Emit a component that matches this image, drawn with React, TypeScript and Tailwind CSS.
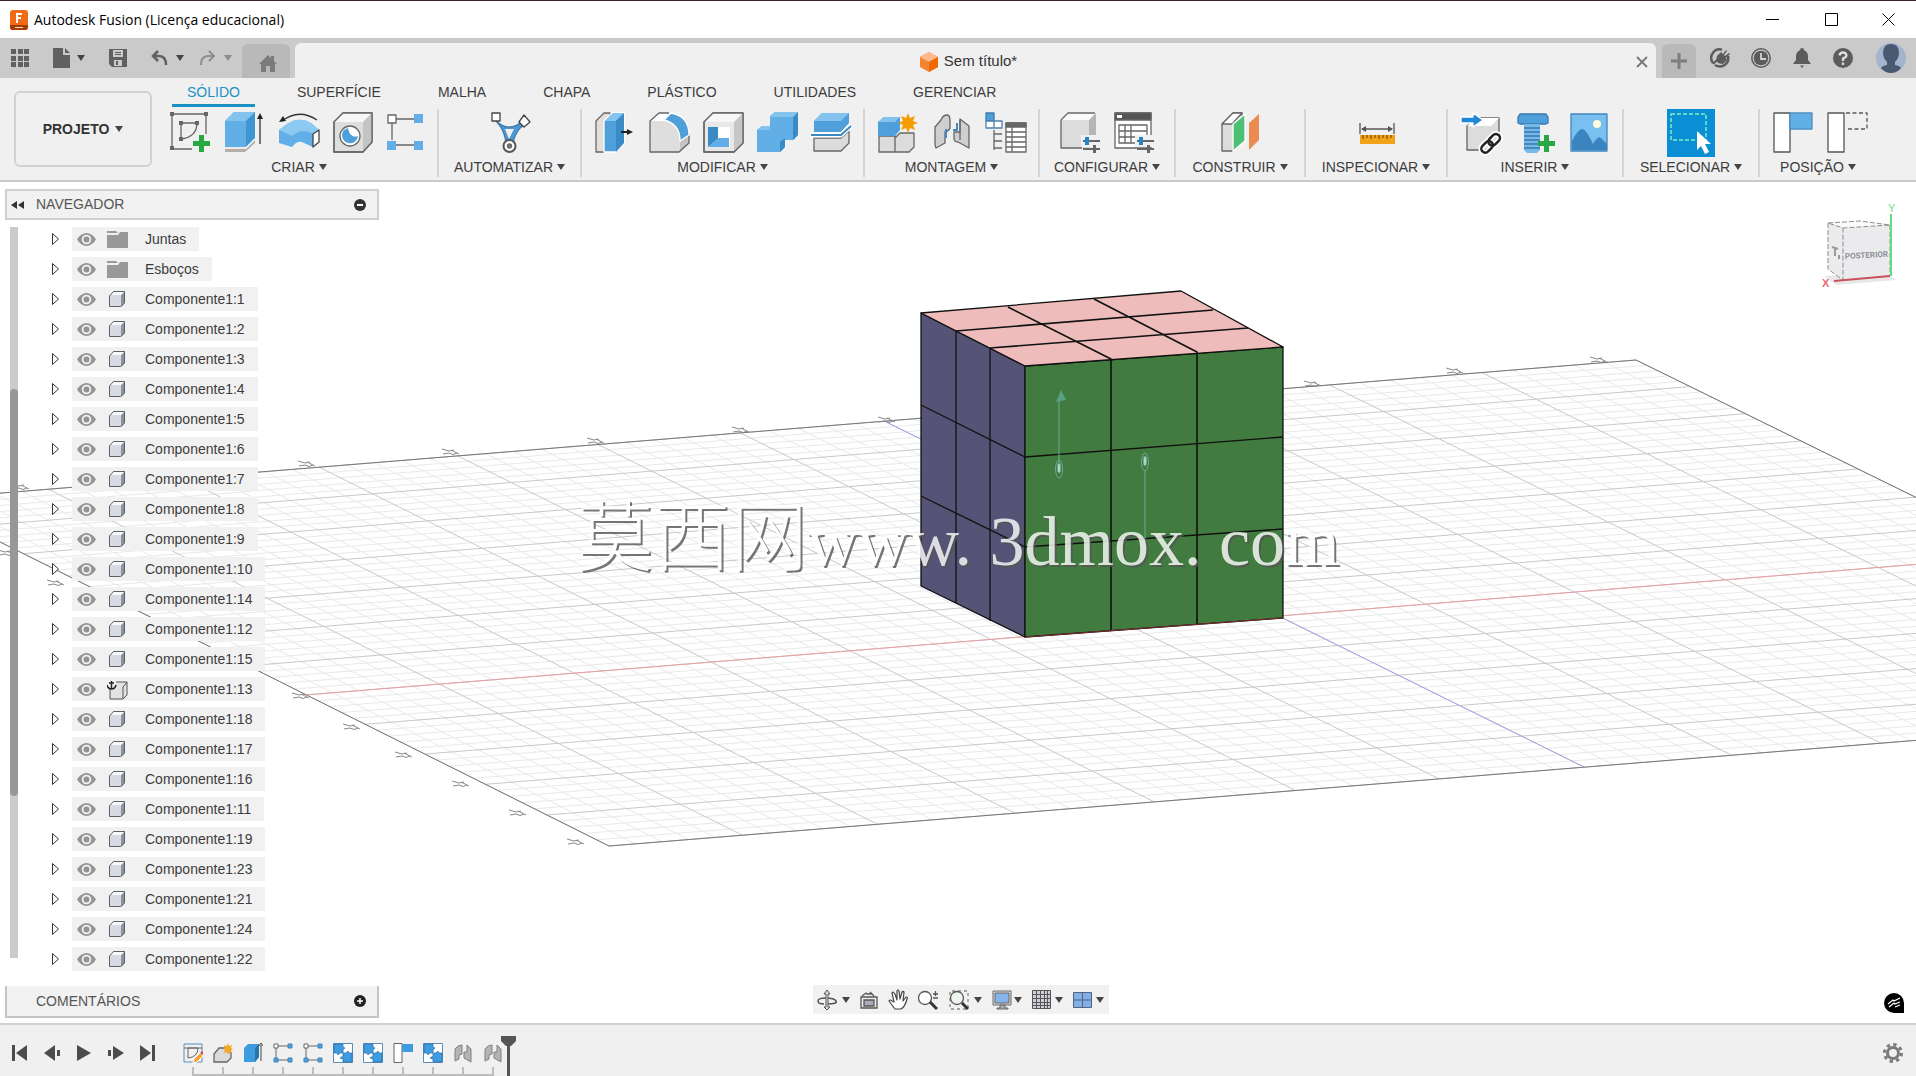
import React from "react";

type Kids = { children: React.ReactNode };

const Ico = ({ children }: Kids) => (
  <svg viewBox="0 0 40 42" className="h-[42px] w-10 flex-none overflow-visible" fill="none" stroke="#666" strokeWidth="1.3" strokeLinejoin="round" aria-hidden="true">
    {children}
  </svg>
);

const Caret = ({ light = false }: { light?: boolean }) => (
  <svg viewBox="0 0 8 6" className={light ? "h-1.5 w-2 flex-none fill-[#8d8d8d]" : "h-1.5 w-2 flex-none fill-[#444]"} aria-hidden="true">
    <path d="M0 0h8L4 6z" />
  </svg>
);

const Plus = ({ x, y }: { x: number; y: number }) => (
  <path transform={`translate(${x} ${y})`} d="M6 0h5v6h6v5h-6v6H6v-6H0V6h6z" fill="#28a745" stroke="none" />
);

/* ---------- ribbon drawings ---------- */

const SketchIcon = () => (
  <Ico>
    <path d="M1 2h34v20M1 2v35h20" />
    <path d="M10 11h16M10 11v16q16-2 16-16" />
    <path d="M-1 0h4v4h-4zM33 0h4v4h-4zM-1 34h4v4h-4zM8 9h4v4H8zM24 9h4v4h-4zM8 25h4v4H8z" fill="#666" stroke="none" />
    <Plus x={22} y={23} />
  </Ico>
);
const ExtrudeIcon = () => (
  <Ico>
    <path d="M0 35v5h20l10-9v-5l-8 9z" fill="#b5aea8" stroke="none" />
    <path d="M0 9 9 0h21v26l-9 9H0z" fill="#62aee6" stroke="none" />
    <path d="M0 9 9 0h21l-9 9z" fill="#83c3ee" stroke="none" />
    <path d="M21 9l9-9v26l-9 9z" fill="#3f94d2" stroke="none" />
    <path d="M0 36h21l9-9" stroke="#fff" />
    <path d="M35 32V5" stroke="#333" />
    <path d="M32 7l3-6 3 6z" fill="#222" stroke="none" />
  </Ico>
);
const RevolveIcon = () => (
  <Ico>
    <path d="M3 9Q20-4 38 8" stroke="#333" />
    <path d="M0 10l4-6 3 5z" fill="#222" stroke="none" />
    <path d="M0 18 8 12q12-8 24-1l8 7v12l-6 5-9-4q-6-4-12 4L0 31z" fill="#62aee6" stroke="none" />
    <path d="M0 18 8 12q12-8 24-1l8 7-6 4q-10-7-21 2z" fill="#8ccaf2" stroke="none" />
    <path d="M34 22l6-4v12l-6 5z" fill="#fff" stroke="#444" />
  </Ico>
);
const HoleIcon = () => (
  <Ico>
    <path d="M1 10 10 1h29v29l-9 10H1z" fill="#dedede" />
    <path d="M1 10 10 1h29l-9 9z" fill="#f6f6f6" stroke="none" />
    <path d="M30 10l9-9v29l-9 10z" fill="#c4c4c4" stroke="none" />
    <path d="M1 10 10 1h29v29l-9 10H1z" />
    <circle cx="17" cy="24" r="10" fill="#fff" />
    <path d="M11 18a8 8 0 1 0 14 6q-8 3-10-8z" fill="#4f9fdb" stroke="none" />
  </Ico>
);
const PatternIcon = () => (
  <Ico>
    <path d="M5 8v20M9 7h18M9 33h18" />
    <path d="M1 3h8v8H1z" fill="#fff" />
    <path d="M27 2h9v9h-9zM0 29h9v9H0zM27 29h9v9h-9z" fill="#62aee6" stroke="none" />
  </Ico>
);
const AutomateIcon = () => (
  <Ico>
    <path d="M6 9q8 7 14 6 6 0 11-5l4 3q-8 3-12 17h-7Q14 17 6 9z" fill="#4e97d4" stroke="#4179ab" />
    <path d="M15 17h9l-5 10z" fill="#f0f0f0" stroke="none" />
    <path d="M2 1h8v8H2zM29 10l5-7 6 7-6 5z" fill="#fff" stroke="#444" />
    <circle cx="19.500" cy="34" r="6" fill="#fff" stroke="#555" strokeWidth="2" />
    <circle cx="19.500" cy="34" r="2" fill="#777" />
  </Ico>
);
const PressPullIcon = () => (
  <Ico>
    <path d="M1 9 9 1h6v30L9 40H1z" fill="#e4ded9" />
    <path d="M9 9l8-8h12v30l-8 9H9z" fill="#4f9fdb" stroke="#fff" />
    <path d="M10 9l8-8h11l-8 8z" fill="#83c3ee" stroke="none" />
    <path d="M21 9l8-8v30l-8 9z" fill="#3a8ac6" stroke="none" />
    <path d="M26 20h7" stroke="#222" strokeWidth="2" />
    <path d="M32 17l6 3-6 3z" fill="#222" stroke="none" />
  </Ico>
);
const FilletIcon = () => (
  <Ico>
    <path d="M1 9 10 1h10q19 2 20 20v10l-10 9H1z" fill="#dedede" stroke="none" />
    <path d="M31 30l9-7v8l-9 9z" fill="#c4c4c4" stroke="none" />
    <path d="M1 9 10 1h10l-5 8z" fill="#fff" stroke="none" />
    <path d="M20 1H10L1 9v31h29l10-9v-8" />
    <path d="M15 8l7-7q18 3 18 22l-9 6Q31 12 15 8z" fill="#4f9fdb" stroke="#fff" />
  </Ico>
);
const ShellIcon = () => (
  <Ico>
    <path d="M1 10 10 1h30v30l-9 9H1z" fill="#e8e8e8" />
    <path d="M1 10 10 1h30l-9 9z" fill="#f7f7f7" stroke="none" />
    <path d="M31 10l9-9v30l-9 9z" fill="#c6c6c6" stroke="none" />
    <path d="M1 10 10 1h30v30l-9 9H1z" />
    <path d="M5 15h22v20H5z" fill="#fff" stroke="none" />
    <path d="M5 15l10 0v12L5 35z" fill="#3a8ac6" stroke="none" />
    <path d="M5 35l10-9h11v9z" fill="#62aee6" stroke="none" />
  </Ico>
);
const CombineIcon = () => (
  <Ico>
    <path d="M0 18l5-4h8V4l5-4h23v23l-5 5h-8v7l-5 5H0z" fill="#62aee6" stroke="none" />
    <path d="M36 5l5-5v23l-5 5zM23 30l5-4v9l-5 5z" fill="#3a8ac6" stroke="none" />
    <path d="M13 4l5-4h23l-5 5H13zM0 18l5-4h8v4z" fill="#83c3ee" stroke="none" />
  </Ico>
);
const SplitIcon = () => (
  <Ico>
    <path d="M3 26h27l8-7v12l-8 8H3z" fill="#dcdcdc" />
    <path d="M3 9 11 1h27v10l-8 9H3z" fill="#4f9fdb" stroke="none" />
    <path d="M3 9 11 1h27l-8 8z" fill="#83c3ee" stroke="none" />
    <path d="M0 23h30l10-9" stroke="#fff" strokeWidth="5" />
    <path d="M0 23h30l10-9" stroke="#3a8ac6" strokeWidth="2" />
  </Ico>
);
const NewComponentIcon = () => (
  <Ico>
    <path d="M1 24h16v16H1zM17 26l5-5h14v14l-5 5H17z" fill="#dcdcdc" />
    <path d="M0 10l6-5h16v13l-5 6H0z" fill="#4f9fdb" stroke="none" />
    <path d="M0 10l6-5h16l-5 5z" fill="#83c3ee" stroke="none" />
    <path d="M30 1l2 5 5-2-2 5 5 2-5 2 2 5-5-2-2 5-2-5-5 2 2-5-5-2 5-2-2-5 5 2z" fill="#f59d00" stroke="none" />
  </Ico>
);
const JointIcon = () => (
  <Ico>
    <path d="M3 15 9 8q2-5 6-5 3 0 3 5v8q-1 3-5 4v11L4 36q-1-2-1-5z" fill="#cfcfcf" />
    <path d="M28 7l9 7v22l-11-6q-4 0-4-4v-6h6z" fill="#cfcfcf" />
    <path d="M14 17v9M25 11v7h-4" stroke="#4089c9" strokeWidth="2" />
    <path d="M28 8v20" />
  </Ico>
);
const TableTreeIcon = () => (
  <Ico>
    <path d="M0 1h8v8H0z" fill="#4f9fdb" stroke="#3f7cb0" />
    <path d="M0 9h8v7H0zM8 9h8v7H8z" fill="#fff" stroke="#4f7fa8" />
    <path d="M8 18v20M8 22h8M8 29h8M8 36h8" />
    <path d="M20 11h20v29H20z" fill="#fff" />
    <path d="M20 11h20v4H20z" fill="#666" />
    <path d="M20 20h20M20 25h20M20 30h20M20 35h20M26 15v25" />
  </Ico>
);
const Sliders = () => (
  <g stroke="none">
    <path d="M21 23h20v12H21z" fill="#f0f0f0" />
    <path d="M23 28h17v2H23zM23 36h17v2H23zM33 33h3v8h-3z" fill="#666" />
    <path d="M25 25h4v8h-4z" fill="#2186c8" />
  </g>
);
const ConfigureIcon = () => (
  <Ico>
    <path d="M1 8 8 1h28l-7 7z" fill="#fbfbfb" stroke="none" />
    <path d="M1 8h28v28H1z" fill="#dcdcdc" stroke="none" />
    <path d="M29 8l7-7v27l-7 8z" fill="#b5b5b5" stroke="none" />
    <path d="M1 8 8 1h27M1 8v28h21" />
    <Sliders />
  </Ico>
);
const ConfigTableIcon = () => (
  <Ico>
    <path d="M1 1h36v35H1z" fill="#fff" />
    <path d="M1 1h36v7H1z" fill="#555" />
    <path d="M3 3h5v3H3z" fill="#fff" stroke="none" />
    <path d="M5 13h28v18H5zM5 19h28M5 25h28M11 13v18M17 13v18" />
    <Sliders />
  </Ico>
);
const ConstructIcon = () => (
  <Ico>
    <path d="M2 12 13 1h9v28L12 39H2z" fill="#dcdcdc" />
    <path d="M2 12 13 1h9L12 12z" fill="#fff" />
    <path d="M13 12 25 2v27L13 39z" fill="#4cbf73" stroke="#fff" />
    <path d="M29 11 39 2v26l-10 10z" fill="#ea8b52" stroke="none" />
  </Ico>
);
const MeasureIcon = () => (
  <Ico>
    <path d="M4 11v11M38 11v11M6 17h30" stroke="#555" />
    <path d="M5 17l5-3v6zM37 17l-5-3v6z" fill="#555" stroke="none" />
    <path d="M4 23h35v9H4z" fill="#f0a31a" stroke="none" />
    <path d="M7 23v4M11 23v3M15 23v4M19 23v3M23 23v4M27 23v3M31 23v4M35 23v3" stroke="#855300" />
  </Ico>
);
const InsertLinkIcon = () => (
  <Ico>
    <path d="M6 14 15 6h23v22l-8 10H6z" fill="#dcdcdc" />
    <path d="M6 14 15 6h23l-8 8z" fill="#fff" stroke="none" />
    <path d="M0 5h12V1l10 7-10 7v-4H0z" fill="#1e88d2" stroke="#fff" />
    <g transform="rotate(-45 30 31)" stroke="#fff" strokeWidth="6">
      <rect x="18" y="27" width="13" height="8" rx="4" />
      <rect x="28" y="27" width="13" height="8" rx="4" />
    </g>
    <g transform="rotate(-45 30 31)" stroke="#222" strokeWidth="2.500">
      <rect x="18" y="27" width="13" height="8" rx="4" />
      <rect x="28" y="27" width="13" height="8" rx="4" />
    </g>
  </Ico>
);
const BoltIcon = () => (
  <Ico>
    <path d="M5 2h26l2 3v6l-2 1H5l-2-1V5z" fill="#4f9fdb" stroke="#3878ae" />
    <path d="M9 12h16v26l-3 3H12l-3-3z" fill="#74b9ea" stroke="none" />
    <path d="M9 16h16M9 20h16M9 24h16M9 28h16M9 32h16M9 36h16" stroke="#3878ae" />
    <Plus x={23} y={23} />
  </Ico>
);
const ImageIcon = () => (
  <Ico>
    <path d="M2 2h36v37H2z" fill="#79c0f0" stroke="#4187bf" />
    <circle cx="28" cy="12" r="4" fill="#fffbe0" stroke="none" />
    <path d="M3 29q6-12 10-12t11 15q5-9 8-6l6 6v6H3z" fill="#3a85c0" stroke="none" />
  </Ico>
);
const SelectIcon = () => (
  <svg viewBox="0 0 48 48" className="h-12 w-12 flex-none" aria-hidden="true">
    <path d="M0 0h48v48H0z" fill="#0a8fd4" />
    <path d="M4 5h35v26H4z" fill="none" stroke="#7df0c4" strokeWidth="1.500" strokeDasharray="4 2" />
    <path d="M30 22v19l4-4 4 8 4-2-4-8h6z" fill="#fff" />
  </svg>
);
const PositionIcon = () => (
  <Ico>
    <path d="M3 1h16v39H3z" fill="#fff" stroke="#555" />
    <path d="M19 1h22v16H19z" fill="#62aee6" stroke="#4f8fc0" />
  </Ico>
);
const RevertIcon = () => (
  <Ico>
    <path d="M3 1h16v39H3z" fill="#fff" stroke="#555" />
    <path d="M21 1h21v16H21" strokeDasharray="4 2.500" stroke="#555" />
  </Ico>
);

type Group = { label: string; width: string; icons: [string, () => React.ReactElement][] };
const groups: Group[] = [
  { label: "CRIAR", width: "w-[278px]", icons: [["Criar esboço", SketchIcon], ["Extrusão", ExtrudeIcon], ["Revolução", RevolveIcon], ["Furo", HoleIcon], ["Padrão retangular", PatternIcon]] },
  { label: "AUTOMATIZAR", width: "w-[143px]", icons: [["Modelagem automatizada", AutomateIcon]] },
  { label: "MODIFICAR", width: "w-[283px]", icons: [["Pressionar/puxar", PressPullIcon], ["Arredondamento", FilletIcon], ["Casca", ShellIcon], ["Combinar", CombineIcon], ["Dividir", SplitIcon]] },
  { label: "MONTAGEM", width: "w-[175px]", icons: [["Novo componente", NewComponentIcon], ["Junta", JointIcon], ["Lista de peças", TableTreeIcon]] },
  { label: "CONFIGURAR", width: "w-[136px]", icons: [["Configurar modelo", ConfigureIcon], ["Tabela de configuração", ConfigTableIcon]] },
  { label: "CONSTRUIR", width: "w-[130px]", icons: [["Plano de deslocamento", ConstructIcon]] },
  { label: "INSPECIONAR", width: "w-[142px]", icons: [["Medir", MeasureIcon]] },
  { label: "INSERIR", width: "w-[176px]", icons: [["Inserir derivado", InsertLinkIcon], ["Inserir fixador", BoltIcon], ["Inserir imagem", ImageIcon]] },
  { label: "SELECIONAR", width: "w-[136px]", icons: [["Selecionar itens", SelectIcon]] },
  { label: "POSIÇÃO", width: "w-[116px]", icons: [["Capturar posição", PositionIcon], ["Reverter posição", RevertIcon]] },
];

const tabs = ["SÓLIDO", "SUPERFÍCIE", "MALHA", "CHAPA", "PLÁSTICO", "UTILIDADES", "GERENCIAR"];

/* ---------- title bar and quick access ---------- */

const TitleBar = () => (
  <header className="flex h-[38px] items-center border-t border-[#3b1f2a] bg-white pl-[10px] text-black">
    <svg viewBox="0 0 18 20" className="h-5 w-[18px]" aria-hidden="true">
      <rect width="18" height="20" rx="3" fill="#f26a14" />
      <path d="M0 15h18v2q0 3-3 3H3q-3 0-3-3z" fill="#a33c00" />
      <path d="M6 3h6v2H8v2h3v2H8v4H6z" fill="#fff" />
      <path d="M5 17h8v1H5z" fill="#ffd9bd" />
    </svg>
    <h1 className="ml-[6px] grow font-['Open_Sans','Noto_Sans',sans-serif] text-[14px]">Autodesk Fusion (Licença educacional)</h1>
    <div className="flex">
      <button aria-label="Minimizar" className="flex h-9 w-[59px] items-center justify-center"><svg viewBox="0 0 13 13" className="h-[13px] w-[13px]" stroke="#000"><path d="M0 6.500h13" /></svg></button>
      <button aria-label="Maximizar" className="flex h-9 w-[59px] items-center justify-center"><svg viewBox="0 0 13 13" className="h-[13px] w-[13px]" stroke="#000" fill="none"><path d="M.5.5h12v12H.5z" /></svg></button>
      <button aria-label="Fechar" className="flex h-9 w-[55px] items-center justify-center"><svg viewBox="0 0 13 13" className="h-[13px] w-[13px]" stroke="#000"><path d="M.5.5l12 12M12.500.5l-12 12" /></svg></button>
    </div>
  </header>
);

const QuickBar = () => (
  <div className="flex h-10 items-end bg-[#cacaca]">
    <div className="flex h-10 w-[242px] items-center pl-[11px] text-[#606060]">
      <button aria-label="Painel de dados" className="mr-[24px]">
        <svg viewBox="0 0 18 18" className="h-[18px] w-[18px] fill-current"><path d="M0 0h5v5H0zM7 0h5v5H7zM13 0h5v5h-5zM0 7h5v5H0zM7 7h5v5H7zM13 7h5v5h-5zM0 13h5v5H0zM7 13h5v5H7zM13 13h5v5h-5z" /></svg>
      </button>
      <button aria-label="Arquivo" className="mr-[24px] flex items-center gap-[7px]">
        <svg viewBox="0 0 17 20" className="h-5 w-[17px] fill-current"><path d="M0 0h10v7h7v13H0zM12 0l5 5h-5z" /></svg>
        <Caret />
      </button>
      <button aria-label="Salvar" className="mr-[24px]">
        <svg viewBox="0 0 18 18" className="h-[18px] w-[18px] fill-current" fillRule="evenodd"><path d="M0 0h18v18H3l-3-3zM4 1v7h10V1zM5 11v6h8v-6zM6 3h6v1H6zM6 5h6v1H6zM7 12h2v4H7z" /></svg>
      </button>
      <button aria-label="Desfazer" className="mr-[15px] flex items-center gap-[8px]">
        <svg viewBox="0 0 17 16" className="h-4 w-[17px]" fill="none" stroke="currentColor" strokeWidth="2.500"><path d="M7 1L2 6l5 5M2 6h6q7 0 7 9" /></svg>
        <Caret />
      </button>
      <button aria-label="Refazer" className="flex items-center gap-[8px] text-[#8d8d8d]">
        <svg viewBox="0 0 17 16" className="h-4 w-[17px]" fill="none" stroke="currentColor" strokeWidth="2"><path d="M10 1l5 5-5 5M15 6H9q-7 0-7 9" /></svg>
        <Caret light />
      </button>
    </div>
    <button aria-label="Início" className="mr-[5px] flex h-[34px] w-12 items-center justify-center rounded-t-md bg-[#b9b9b9] pt-1 pl-[3px]">
      <svg viewBox="0 0 18 17" className="h-[17px] w-[18px] fill-[#7b7b7b]"><path d="M9 0l3 3V1h3v5l3 3h-2v8h-5v-6H7v6H2V9H0z" /></svg>
    </button>
    <div className="flex h-[35px] grow items-center rounded-t-md bg-[#f0f0f0] pt-0.5 pr-[8px]">
      <div className="flex grow items-center justify-center gap-1.5 pl-[6px] text-[15px] text-[#333]">
        <svg viewBox="0 0 18 20" className="h-5 w-[18px]" aria-hidden="true"><path d="M0 5l9-5 9 5v10l-9 5-9-5z" fill="#f58432" /><path d="M0 5l9-5 9 5-9 5z" fill="#ffb98a" /><path d="M9 10l9-5v10l-9 5z" fill="#ee6a00" /></svg>
        <span>Sem título*</span>
      </div>
      <button aria-label="Fechar documento"><svg viewBox="0 0 12 12" className="h-3 w-3" stroke="#777" strokeWidth="1.800"><path d="M1 1l10 10M11 1L1 11" /></svg></button>
    </div>
    <button aria-label="Novo documento" className="ml-[6px] flex h-[34px] w-[34px] items-center justify-center rounded-t-md bg-[#b9b9b9]">
      <svg viewBox="0 0 16 16" className="h-4 w-4 fill-[#7d7d7d]"><path d="M6.500 0h3v6.500H16v3H9.500V16h-3V9.500H0v-3h6.500z" /></svg>
    </button>
    <div className="ml-[14px] flex h-10 items-center gap-[21px] pr-[10px]">
      <button aria-label="Extensões"><svg viewBox="0 0 20 20" className="h-5 w-5" fill="none" stroke="#5c5c5c" strokeWidth="2.500"><path d="M12 1.700A8.500 8.500 0 0 0 3 15M5 17A8.500 8.500 0 0 0 18 8" /><path d="M3 16l5-5" strokeWidth="2" /><path d="M7 8l4-4 2 2 3-4 1 1-3 4 1 1 4-3 1 1-4 4 1 2-4 4q-4 0-6-2-1-3 0-6z" fill="#5c5c5c" stroke="none" /></svg></button>
      <button aria-label="Status do trabalho"><svg viewBox="0 0 20 20" className="h-5 w-5"><circle cx="10" cy="10" r="9.200" fill="none" stroke="#5c5c5c" strokeWidth="1.500" /><circle cx="10" cy="10" r="7.300" fill="#5c5c5c" /><path d="M10 5v6h5" fill="none" stroke="#d0d0d0" strokeWidth="1.800" /></svg></button>
      <button aria-label="Notificações"><svg viewBox="0 0 20 20" className="h-5 w-5 fill-[#5c5c5c]"><path d="M10 0q2 0 2 2 4 2 4 6v4l3 4H1l3-4V8q0-4 4-6 0-2 2-2zM8 17.500h4l-2 2.500z" /></svg></button>
      <button aria-label="Ajuda"><svg viewBox="0 0 20 20" className="h-5 w-5"><circle cx="10" cy="10" r="10" fill="#5c5c5c" /><path d="M6.500 7.500Q7 4.500 10 4.500t3.500 3Q13.500 9 10 10.500V13M10 14.500V17" fill="none" stroke="#dedede" strokeWidth="2.300" /></svg></button>
      <button aria-label="Conta" className="ml-[2px]"><svg viewBox="0 0 30 30" className="h-[30px] w-[30px]"><circle cx="15" cy="15" r="15" fill="#a3b4cf" /><path d="M15 1q8 0 8 9 0 5-4 9v3q5 1 6 3-4 5-10 5T5 25q1-2 6-3v-3q-4-4-4-9 0-9 8-9z" fill="#4b5970" /></svg></button>
    </div>
  </div>
);

const Ribbon = () => (
  <div className="flex border-b-2 border-[#c9c9c9] bg-[#f0f0f0] text-[14px] text-[#3c3c3c]">
    <button className="mt-[13px] mr-[9px] mb-[13px] ml-[14px] flex h-[76px] w-[138px] flex-none items-center justify-center gap-1.5 rounded-md border-2 border-[#d2d2d2] font-bold text-[#333]">
      PROJETO <Caret />
    </button>
    <div className="min-w-0 grow">
      <nav className="flex h-[29px] gap-[27px] pl-[11px]">
        {tabs.map((t, i) => (
          <button key={t} className={i === 0 ? "border-b-3 border-[#1c92c4] px-[15px] pt-0.5 leading-5 text-[#1c92c4]" : "border-b-3 border-transparent px-[15px] pt-0.5 leading-5"}>{t}</button>
        ))}
      </nav>
      <div className="flex h-[70px] pt-[2px]">
        {groups.map((g, i) => (
          <section key={g.label} className={`flex flex-none flex-col items-center ${g.width} ${i < groups.length - 1 ? "border-r-2 border-[#d4d4d4]" : ""}`}>
            <div className="flex h-[47px] items-center gap-[14px]">
              {g.icons.map(([name, Icon]) => (
                <button key={name} aria-label={name}><Icon /></button>
              ))}
            </div>
            <button className="flex items-center gap-1 pt-px leading-5 whitespace-nowrap">{g.label} <Caret /></button>
          </section>
        ))}
      </div>
    </div>
  </div>
);

/* ---------- 3D scene ---------- */

const warp = (n: number) => {
  const t = (n + 7) / 12;
  return t - 0.083 * t * (1 - t);
};
const project = (u: number, v: number) => {
  const s = warp(u);
  const r = warp(v);
  const mix = (a: number, b: number, c: number, d: number) => (1 - s) * (1 - r) * a + s * (1 - r) * b + s * r * c + (1 - s) * r * d;
  return `${Math.round(mix(-84, 1636, 2341, 609) * 10) / 10} ${Math.round(mix(500, 360, 706, 846) * 10) / 10}`;
};
const steps = Array.from({ length: 61 }, (_, i) => i);
const lineSet = (keep: (i: number) => boolean) =>
  steps.filter(keep).map((i) => {
    const n = -7 + i / 5;
    return `M${project(n, -7)}L${project(n, 5)}M${project(-7, n)}L${project(5, n)}`;
  }).join("");
const minorLines = lineSet((i) => i % 5 !== 0);
const majorLines = lineSet((i) => i % 5 === 0);

const tickMarks: [number, number][] = [
  [22, 487], [308, 464], [452, 452], [597, 441], [742, 430], [888, 420], [1314, 384], [1456, 371], [1600, 360],
  [8, 553], [57, 583], [302, 696], [353, 727], [405, 755], [462, 784], [519, 813], [577, 842],
];

const Scene = () => (
  <svg viewBox="0 182 1916 841" preserveAspectRatio="xMinYMin slice" className="absolute inset-0 h-full w-full" fill="none" role="img" aria-label="Modelo 3D">
    <path d={minorLines} stroke="#e9e9e9" />
    <path d={majorLines} stroke="#c8c8c8" />
    <path d={`M${project(-7, -7)}L${project(5, -7)}L${project(5, 5)}L${project(-7, 5)}Z`} stroke="#777" />
    <path d={`M${project(-7, 0)}L${project(5, 0)}`} stroke="#e8a0a4" />
    <path d={`M${project(0, -7)}L${project(0, 5)}`} stroke="#a3a3ea" />
    {tickMarks.map(([x, y]) => (
      <path key={`${x}-${y}`} transform={`translate(${x} ${y})`} d="M-10-3l7 2 5-1M-9 2l6-1q4 3 8 0M-1-2l8 4" stroke="#888" />
    ))}
    <g stroke="#111" strokeWidth="1.300" strokeLinejoin="round">
      <path d="M921 313L1025 366V637L921 586Z" fill="#555477" />
      <path d="M1025 366L1283 347V618L1025 637Z" fill="#417b3f" />
      <path d="M921 313L1181 291L1283 347L1025 366Z" fill="#efbcbc" />
      <path d="M956 331V603M990 348V621M921 405L1025 457L1283 437M921 496L1025 547L1283 529" />
      <path d="M956 331L1213 310M990 348L1248 328M1008 307L1111 359V631M1094 299L1197 352V625" strokeWidth="1.600" />
    </g>
    <path d="M1025 637L1283 618" stroke="#7d2b2b" />
    <g stroke="#68ac93">
      <path d="M1059 463V400M1145 470V542" />
      <path d="M1056 402l5-12 5 10z" fill="#5aa184" stroke="none" />
      <ellipse cx="1059" cy="469" rx="3.500" ry="9" />
      <ellipse cx="1145" cy="462" rx="3.500" ry="9" />
      <ellipse cx="1059" cy="468" rx="1.500" ry="5" fill="#b7dccf" />
      <ellipse cx="1145" cy="461" rx="1.500" ry="5" fill="#b7dccf" />
    </g>
  </svg>
);

const ViewCube = () => (
  <svg viewBox="0 0 86 96" className="absolute top-[18px] right-4 h-24 w-[86px]" role="img" aria-label="Cubo de visualização">
    <path d="M10 76l12 9 60-5-12-8z" fill="#d9d9d9" opacity=".6" />
    <path d="M14 23l15 5v52l-15-11z" fill="#ececee" />
    <path d="M14 23l32-2 30 4-47 3z" fill="#fafafa" />
    <path d="M29 28l47-3v51l-47 4z" fill="#ebebed" />
    <path d="M14 23l32-2 30 4-47 3zM14 23v46l15 11V28M76 25v51" fill="none" stroke="#8d8d8d" strokeDasharray="5 2" />
    <path d="M18 47l6 2M21 48v8M25 55v4" stroke="#9a9a9a" strokeWidth="2" />
    <path d="M20 81l56-5" stroke="#c9525c" strokeWidth="2" />
    <path d="M77 14v62" stroke="#5fe07e" strokeWidth="2" />
    <text x="31" y="59" transform="rotate(-3 31 59)" className="fill-[#8e9299] font-[Roboto,sans-serif] text-[8px] font-bold">POSTERIOR</text>
    <text x="74" y="12" className="fill-[#6ee08c] text-[11px]">Y</text>
    <text x="8" y="87" className="fill-[#e56a72] text-[11px] font-bold">X</text>
  </svg>
);

/* ---------- browser panel ---------- */

const nodes = ["Juntas", "Esboços", ...[1, 2, 3, 4, 5, 6, 7, 8, 9, 10, 14, 12, 15, 13, 18, 17, 16, 11, 19, 23, 21, 24, 22].map((n) => `Componente1:${n}`)];

const NodeIcon = ({ index }: { index: number }) => {
  if (index < 2)
    return <svg viewBox="0 0 21 17" className="h-[17px] w-[21px] fill-[#999]"><path d="M0 0h9l2 2H0zM0 4h11l2-3h8v16H0z" /></svg>;
  if (nodes[index] === "Componente1:13")
    return (
      <svg viewBox="0 0 21 21" className="h-[21px] w-[21px]" fill="none" stroke="#555"><path d="M3 20V8l5-5h12v13l-4 4z" fill="#e2e2e2" /><path d="M16 20V8l4-5" /><path d="M0 0h9v10H0z" fill="#f0f0f0" stroke="none" /><path d="M4.500 2v8M2 4h5M0 6q1 4 4.500 4T9 6" stroke="#222" strokeWidth="1.500" /></svg>
    );
  return (
    <svg viewBox="0 0 21 19" className="h-[19px] w-[21px]"><path d="M2 17V6l4-5h12v12l-4 4z" fill="#d6dae2" /><path d="M14 17V5l4-4v12z" fill="#8e939f" /><path d="M3 5l3-3h11l-3 3z" fill="#f8f9fb" /><path d="M2.500 16.500V6l4-4.500h11V13l-4 3.500z" fill="none" stroke="#5d6068" strokeLinejoin="round" /></svg>
  );
};

const Browser = () => (
  <aside className="relative ml-[5px] w-[374px] text-[14px]">
    <div className="flex h-[31px] items-center border-2 border-[#cfcfcf] bg-[#f1f1f1] pr-[11px] pl-1 text-[#555]">
      <button aria-label="Recolher" className="mr-3"><svg viewBox="0 0 13 8" className="h-2 w-[13px] fill-[#333]"><path d="M6 0v8L0 4zM13 0v8L7 4z" /></svg></button>
      <h2 className="grow">NAVEGADOR</h2>
      <button aria-label="Minimizar navegador"><svg viewBox="0 0 12 12" className="h-3 w-3"><circle cx="6" cy="6" r="6" fill="#333" /><path d="M3 6h6" stroke="#fff" strokeWidth="2" /></svg></button>
    </div>
    <div className="mt-[7px] flex">
      <div className="ml-[5px] h-[731px] w-2 flex-none bg-[#cbcbcb] pt-[162px]">
        <div className="h-[407px] w-2 rounded-sm bg-[#979797]" />
      </div>
      <ul className="ml-[33px] flex flex-col gap-1.5">
        {nodes.map((n, i) => (
          <li key={n} className="flex h-6 items-center">
            <button aria-label={`Expandir ${n}`} className="mr-3 flex-none"><svg viewBox="0 0 9 14" className="h-3.5 w-[9px] fill-white" stroke="#333"><path d="M1.500 1.500v11l6-5.500z" /></svg></button>
            <div className="flex h-6 items-center bg-[#f1f1f1] pr-[13px] pl-[5px] text-[#3c3c3c]">
              <button aria-label={`Visibilidade ${n}`}><svg viewBox="0 0 19 13" className="h-[13px] w-[19px]"><path d="M0 6.500Q4 0 9.500 0T19 6.500Q15 13 9.500 13T0 6.500z" fill="#949494" /><circle cx="9.500" cy="6.500" r="4.800" fill="#f1f1f1" /><circle cx="9.500" cy="6.500" r="3" fill="#949494" /></svg></button>
              <span className="mr-[17px] ml-[11px] flex w-[21px]"><NodeIcon index={i} /></span>
              <span>{n}</span>
            </div>
          </li>
        ))}
      </ul>
    </div>
  </aside>
);

/* ---------- viewport tools ---------- */

const ViewTools = () => (
  <div className="absolute bottom-[9px] left-[813px] flex h-[29px] w-[296px] items-center justify-between bg-[#f1f1f1] pr-[5px] pl-[4px]">
    <button aria-label="Órbita" className="flex items-center gap-[5px]"><svg viewBox="0 0 20 20" className="h-5 w-5" fill="#fff" stroke="#555"><path d="M1 11q0-3 8-3t10 3-9 3M1 11q0 3 6 3" fill="none" strokeWidth="1.500" /><path d="M10 0l3 4h-2v13h2l-3 3-3-3h2V4H7z" fill="#ddd" /></svg><Caret /></button>
    <button aria-label="Olhar para"><svg viewBox="0 0 18 18" className="h-[18px] w-[18px]" fill="none" stroke="#555" strokeWidth="1.300"><path d="M1 6h16v11H1z" fill="#eee" /><path d="M4 9h10v6H4z" fill="#aab" /><path d="M2 5l4-3 1 1h5l-2-2 4 4" /></svg></button>
    <button aria-label="Pan"><svg viewBox="0 0 20 21" className="h-[21px] w-5" fill="#fff" stroke="#444" strokeWidth="1.200" strokeLinejoin="round"><path d="M7 20L1 12q1-2 3 0l2 1-2-9q1-2 3 1l2 6V2q1-2 2 0l1 8 2-7q1-1 2 0l-1 9 3-4q2 0 1 2-2 8-6 10z" /></svg></button>
    <button aria-label="Zoom"><svg viewBox="0 0 20 20" className="h-5 w-5" fill="#fff" stroke="#555" strokeWidth="1.300"><circle cx="7" cy="8" r="6.500" /><path d="M12 12l7 7" stroke="#333" strokeWidth="3" /><path d="M15 4h5M17.500 1v5M15 8h5" /></svg></button>
    <button aria-label="Ajustar" className="flex items-center gap-[5px]"><svg viewBox="0 0 20 20" className="h-5 w-5" fill="#eef5ee" stroke="#555" strokeWidth="1.300"><path d="M1 5V1h18v18H1z" fill="none" stroke="#888" strokeDasharray="3 3" /><circle cx="8" cy="8" r="6.500" /><path d="M13 13l6 6" stroke="#333" strokeWidth="3" /></svg><Caret /></button>
    <button aria-label="Exibição" className="flex items-center gap-0.5"><svg viewBox="0 0 20 20" className="h-5 w-5" stroke="#666"><path d="M1 1h18v14H1z" fill="#ddd" /><path d="M3 3h14v10H3z" fill="#85b4ea" /><path d="M8 15h5v3h3v1H5v-1h3z" fill="#aaa" /></svg><Caret /></button>
    <button aria-label="Grade" className="flex items-center gap-1"><svg viewBox="0 0 19 19" className="h-[19px] w-[19px]" stroke="#555" fill="#cdced6"><path d="M.5.5h18v18H.5zM4.500 0v19M8.500 0v19M12.500 0v19M0 4.500h19M0 8.500h19M0 12.500h19M15.500 0v19M0 15.500h19" /></svg><Caret /></button>
    <button aria-label="Viewports" className="flex items-center gap-1"><svg viewBox="0 0 19 16" className="h-4 w-[19px]" fill="#83b1e6" stroke="#4e6480"><path d="M.5.5h18v15H.5zM9.500 1v14M1 8h17" /></svg><Caret /></button>
  </div>
);

const Comments = () => (
  <div className="absolute bottom-[5px] left-[5px] flex h-[32px] w-[374px] items-center border-x-2 border-b-2 border-[#c4c4c4] bg-[#f1f1f1] pr-[11px] pl-[29px] text-[14px] text-[#555]">
    <h2 className="grow">COMENTÁRIOS</h2>
    <button aria-label="Expandir comentários"><svg viewBox="0 0 12 12" className="h-3 w-3"><circle cx="6" cy="6" r="6" fill="#222" /><path d="M3 6h6M6 3v6" stroke="#fff" strokeWidth="1.500" /></svg></button>
  </div>
);

/* ---------- timeline ---------- */

const Small = ({ children }: Kids) => (
  <svg viewBox="0 0 20 20" className="h-5 w-5" fill="none" stroke="#666" aria-hidden="true">{children}</svg>
);
const tPattern = <><path d="M3 5v10M5 3h10M5 17h10" /><path d="M1 1h4v4H1z" fill="#fff" /><path d="M15 1h4v4h-4zM1 15h4v4H1zM15 15h4v4h-4z" fill="#4f9fdb" stroke="#3f85bd" /></>;
const tCapture = <><path d="M.5.5h19v19H.5z" fill="#fff" stroke="#5a8db8" /><path d="M1 1h9v3l2 1-2 2v3H7l-2 2-1-2H1zM10 10h3l2-2 1 2h3v9h-9v-3l-3-1 3-2z" fill="#3d9be0" stroke="#2f6fa3" strokeWidth=".7" /></>;
const tPosition = <><path d="M1 .5h8v19H1z" fill="#fff" /><path d="M9 1h11v8H9z" fill="#3d9be0" stroke="none" /></>;
const tJoint = <><path d="M2 6l3-3 4-1v9l-3 1v4l-4 2zM18 19V6l-4-4v7h-3v6z" fill="#b4b4b4" stroke="#808080" /></>;
const features: [string, React.ReactElement][] = [
  ["Esboço", <><path d="M1 1h18v18H1z" stroke="#5a8db8" /><path d="M5 5h10q0 9-10 10zM1 5h18" /><path d="M10 20l1-4 6-6 3 3-6 6z" fill="#f5a32a" stroke="#fff" /><path d="M17 10l2-2 2 2-2 2z" fill="#d9534f" stroke="none" /></>],
  ["Componente", <><path d="M1 19V11l5-6h6l6 5v5l-4 4z" fill="#dadada" strokeWidth="1.300" /><path d="M15 0l1 3 3-1-1 3 2 1-2 1 1 3-3-1-1 3-1-3-3 1 1-3-2-1 2-1-1-3 3 1z" fill="#f5a623" stroke="none" /></>],
  ["Extrusão", <><path d="M1 5l4-4h11v13l-4 5H1z" fill="#3d9be0" stroke="none" /><path d="M12 5l4-4v13l-4 5z" fill="#2775ad" stroke="none" /><path d="M18 18V2M16 3l2-3 2 3" stroke="#444" /></>],
  ["Padrão 1", tPattern],
  ["Padrão 2", tPattern],
  ["Captura 1", tCapture],
  ["Captura 2", tCapture],
  ["Posição", tPosition],
  ["Captura 3", tCapture],
  ["Junta 1", tJoint],
  ["Junta 2", tJoint],
];
const playback: [string, string][] = [
  ["Início", "M0 0h3v16H0zM15 0v16L4 8z"],
  ["Voltar", "M11 0v16L0 8zM13 5h3v6h-3z"],
  ["Reproduzir", "M1 0l14 8L1 16z"],
  ["Avançar", "M5 1l11 7-11 7zM0 5h3v6H0z"],
  ["Fim", "M0 0l11 8L0 16zM12 0h3v16h-3z"],
];

const Timeline = () => (
  <footer className="flex h-[53px] flex-none items-start border-t-2 border-[#d0d0d0] bg-[#f0f0f0]">
    <div className="mt-5 ml-[12px] flex gap-4">
      {playback.map(([n, d]) => (
        <button key={n} aria-label={n}><svg viewBox="0 0 16 16" className="h-4 w-4 fill-[#4c4c4c]"><path d={d} /></svg></button>
      ))}
    </div>
    <ol className="mt-[18px] ml-[22px] flex">
      {features.map(([n, art], i) => (
        <li key={n} className="flex w-[30px] flex-col items-center">
          <button aria-label={n}><Small>{art}</Small></button>
          <svg viewBox="0 0 30 9" className="mt-1 h-[9px] w-[30px]" fill="none" stroke="#bdbdbd" strokeWidth="2"><path d={i === 0 ? "M15 0v8h15" : i === features.length - 1 ? "M15 0v8H0" : "M15 0v8M0 8h30"} /></svg>
        </li>
      ))}
    </ol>
    <svg viewBox="0 0 15 40" className="mt-[11px] -ml-[7px] h-10 w-[15px] fill-[#555]" role="img" aria-label="Marcador"><path d="M0 0h15v5l-5 5H9v30H6V10H5L0 5z" /></svg>
    <div className="grow" />
    <button aria-label="Configurações" className="mt-[18px] mr-[13px]">
      <svg viewBox="0 0 20 20" className="h-5 w-5" fill="none" stroke="#7a7a7a"><circle cx="10" cy="10" r="5.500" strokeWidth="3" /><circle cx="10" cy="10" r="8.500" strokeWidth="3" strokeDasharray="3.300 3.376" /></svg>
    </button>
  </footer>
);

export default function App() {
  return (
    <div className="flex min-h-screen flex-col overflow-hidden bg-white font-['Liberation_Sans',Arial,sans-serif] text-[14px]">
      <TitleBar />
      <QuickBar />
      <Ribbon />
      <main className="relative grow overflow-hidden bg-white pt-[7px]">
        <Scene />
        <Browser />
        <p className="pointer-events-none absolute inset-x-0 top-[300px] flex items-baseline justify-center leading-[100px] whitespace-pre text-white opacity-80 [text-shadow:2px_2px_0_#555]">
          <span className="font-['Noto_Sans_CJK_SC',sans-serif] text-[77px] font-light">莫西网</span>
          <span className="font-['Liberation_Serif',serif] text-[70px]">www. 3dmox. com</span>
        </p>
        <ViewCube />
        <Comments />
        <ViewTools />
        <button aria-label="Assistente" className="absolute right-[12px] bottom-[10px]">
          <svg viewBox="0 0 20 20" className="h-5 w-5"><path d="M10 0a10 10 0 0 1 10 10v10H10a10 10 0 0 1 0-20z" fill="#000" /><path d="M4 11l5-4 1 1 6-3M5 14l5-4 1 1 5-2M11 14l5-2" stroke="#fff" fill="none" strokeWidth="1.300" /></svg>
        </button>
      </main>
      <Timeline />
    </div>
  );
}
